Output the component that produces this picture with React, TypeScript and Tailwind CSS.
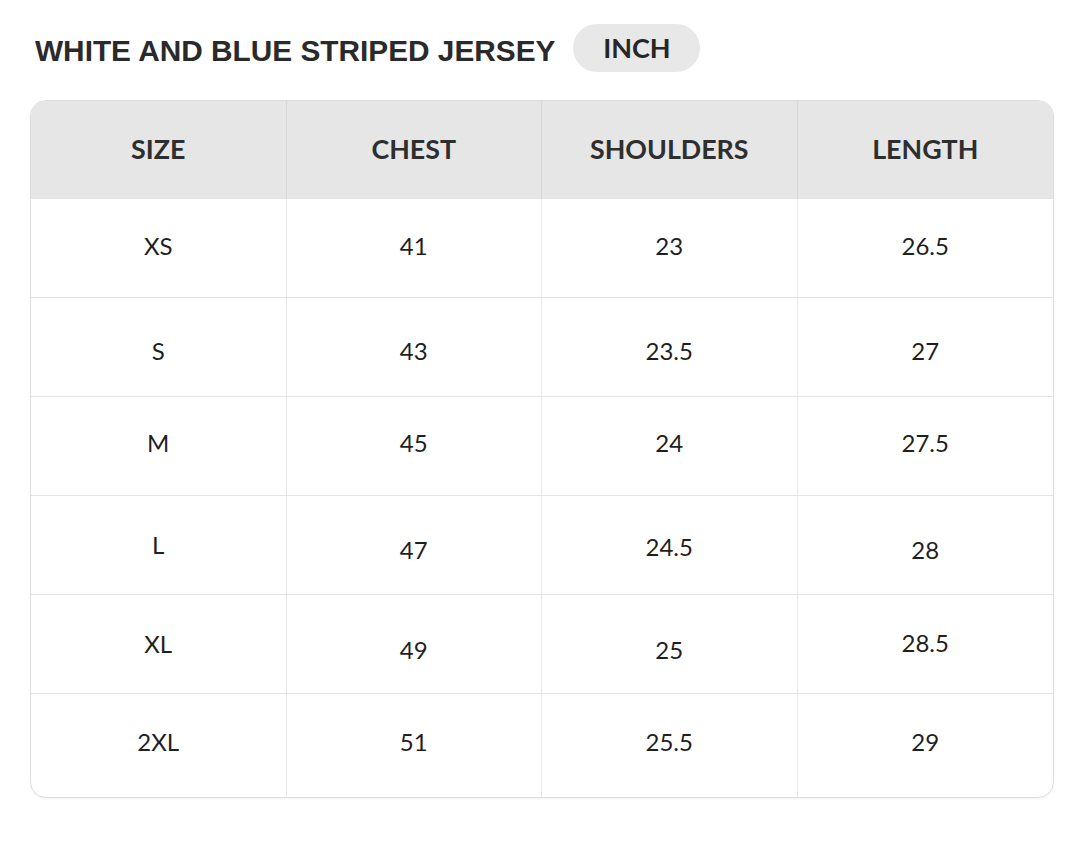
import React from 'react';

type Row = { size: string; chest: string; shoulders: string; length: string; pad: string[] };

// each row carries the small vertical nudges seen in the original cells
const ROWS: Row[] = [
  { size: 'XS', chest: '41', shoulders: '23', length: '26.5', pad: ['pb-[4px]', 'pb-[4px]', 'pb-[4px]', 'pb-[4px]'] },
  { size: 'S', chest: '43', shoulders: '23.5', length: '27', pad: ['pt-[8px]', 'pt-[8px]', 'pt-[8px]', 'pt-[8px]'] },
  { size: 'M', chest: '45', shoulders: '24', length: '27.5', pad: ['pb-[6px]', 'pb-[6px]', 'pb-[6px]', 'pb-[6px]'] },
  { size: 'L', chest: '47', shoulders: '24.5', length: '28', pad: ['', 'pt-[10px]', 'pt-[4px]', 'pt-[10px]'] },
  { size: 'XL', chest: '49', shoulders: '25', length: '28.5', pad: ['', 'pt-[11px]', 'pt-[11px]', 'pb-[2px]'] },
  { size: '2XL', chest: '51', shoulders: '25.5', length: '29', pad: ['pb-[8px]', 'pb-[8px]', 'pb-[8px]', 'pb-[8px]'] },
];

const HEADERS = ['SIZE', 'CHEST', 'SHOULDERS', 'LENGTH'];

const App: React.FC = () => {
  return (
    <div className="min-h-[841px] bg-white pt-[24px] pl-[30px]">
      <div className="flex items-center gap-[18px] pl-[5px]">
        <h2 className="font-['Liberation_Sans',Arial,sans-serif] text-[29.8px] font-bold leading-none text-[#2a2a2a] pt-[5px]">
          WHITE AND BLUE STRIPED JERSEY
        </h2>
        <span className="flex h-[48px] w-[127px] items-center justify-center rounded-full bg-[#e8e8e8] font-['Lato',sans-serif] text-[27px] font-bold text-[#262626]">
          INCH
        </span>
      </div>

      <div className="mt-[28px] w-[1024px] overflow-hidden rounded-[16px] border border-[#dedede] shadow-[0_1px_2px_rgba(0,0,0,0.06)] font-['Lato',sans-serif]">
        <div className="grid h-[97px] grid-cols-4 bg-[#e6e6e6]">
          {HEADERS.map((h, i) => (
            <div
              key={h}
              className={`flex items-center justify-center text-[26.8px] font-bold text-[#2e2e2e] ${
                i < 3 ? 'border-r border-[#d7d7d7]' : ''
              }`}
            >
              {h}
            </div>
          ))}
        </div>

        {ROWS.map((row, r) => {
          const cells = [row.size, row.chest, row.shoulders, row.length];
          return (
            <div
              key={row.size}
              className={`grid grid-cols-4 border-t border-[#e4e4e4] ${r === ROWS.length - 1 ? 'h-[104px]' : 'h-[99px]'}`}
            >
              {cells.map((c, i) => (
                <div
                  key={i}
                  className={`flex items-center justify-center text-[24px] text-[#1f1f1f] ${
                    i < 3 ? 'border-r border-[#e8e8e8]' : ''
                  }`}
                >
                  <span className={row.pad[i]}>{c}</span>
                </div>
              ))}
            </div>
          );
        })}
      </div>
    </div>
  );
};

export default App;
